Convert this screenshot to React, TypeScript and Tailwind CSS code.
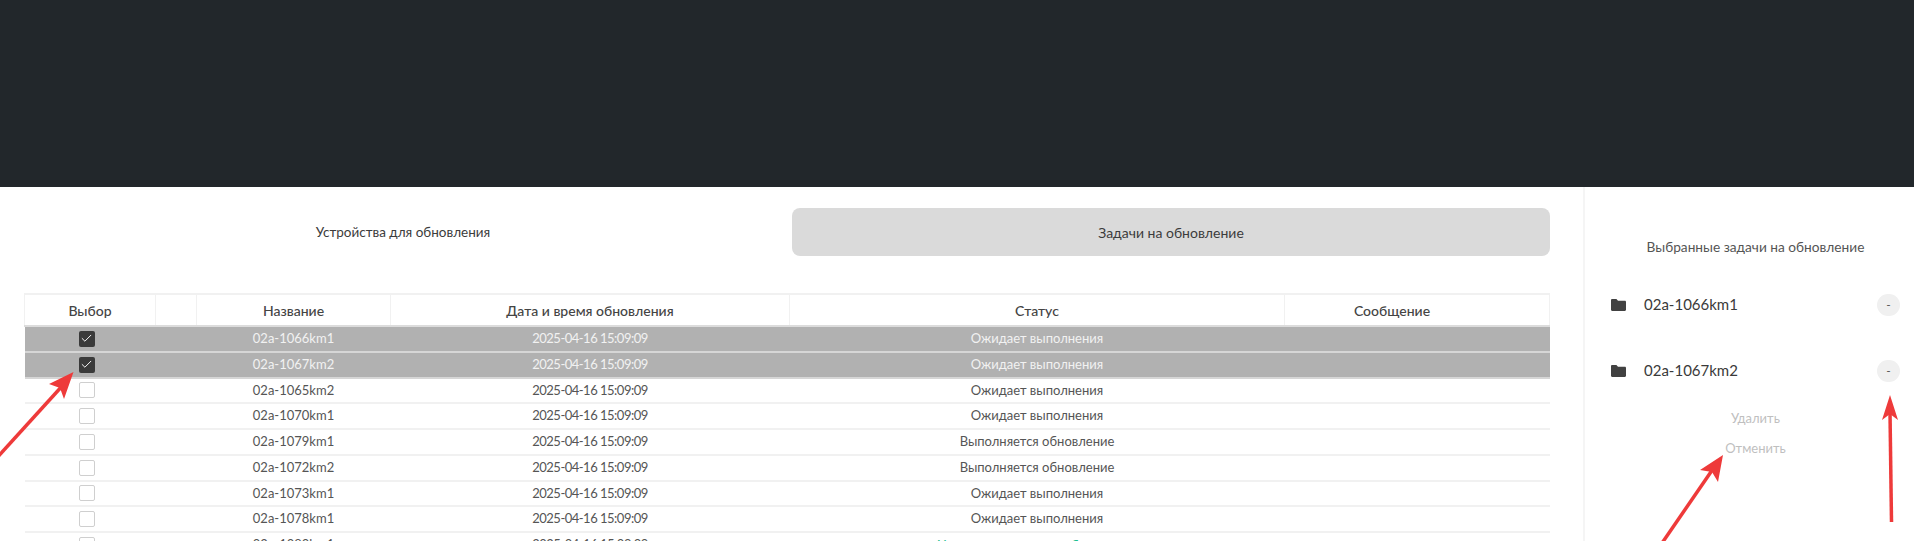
import { Check } from 'lucide-react';

const rows = [
  { name: '02a-1066km1', status: 'Ожидает выполнения', selected: true },
  { name: '02a-1067km2', status: 'Ожидает выполнения', selected: true },
  { name: '02a-1065km2', status: 'Ожидает выполнения', selected: false },
  { name: '02a-1070km1', status: 'Ожидает выполнения', selected: false },
  { name: '02a-1079km1', status: 'Выполняется обновление', selected: false },
  { name: '02a-1072km2', status: 'Выполняется обновление', selected: false },
  { name: '02a-1073km1', status: 'Ожидает выполнения', selected: false },
  { name: '02a-1078km1', status: 'Ожидает выполнения', selected: false },
  { name: '02a-1080km1', status: 'Успешно выполнено обновление', selected: false, done: true },
];

const chosen = ['02a-1066km1', '02a-1067km2'];

function FolderIcon() {
  return (
    <svg width="15" height="12" viewBox="0 0 15 12" className="shrink-0">
      <path d="M1.2 0h4.2l1.6 1.7h6.8c.7 0 1.2.5 1.2 1.2v7.900c0 .7-.5 1.200-1.200 1.200H1.200C.5 12 0 11.500 0 10.800V1.200C0 .5.500 0 1.200 0z" fill="#414141" />
    </svg>
  );
}

function Arrows() {
  return (
    <svg width="1914" height="541" viewBox="0 0 1914 541" className="absolute left-0 top-0 pointer-events-none">
      <g stroke="#ee3a3a" strokeWidth="3.500" fill="none">
        <path d="M-6 461L64 384" />
        <path d="M1660 546L1715 466" />
        <path d="M1891.500 522L1890 412" />
      </g>
      <g fill="#ee3a3a">
        <path d="M73.500 372L64 399L60 388L49 384z" />
        <path d="M1723 455L1718 482L1712 472L1700 470z" />
        <path d="M1890 395L1898 420L1890 414L1882 420z" />
      </g>
    </svg>
  );
}

export default function App() {
  return (
    <div className="relative h-[541px] w-[1914px] overflow-hidden bg-white font-['Lato','Noto_Sans',sans-serif] text-[#444]">
      <div className="h-[187px] bg-[#22272b]" />

      <div className="flex">
        <main className="w-[1583px] shrink-0 pl-[24px] pr-[33px]">
          <div className="mt-[21px] grid grid-cols-2 gap-[10px] text-[#3c3c3c]">
            <button className="flex h-[48px] items-center justify-center rounded-lg text-[13.500px]">Устройства для обновления</button>
            <button className="flex h-[48px] items-center justify-center rounded-lg bg-[#dadada] text-[14px]">Задачи на обновление</button>
          </div>

          <table className="mt-[37px] w-full table-fixed border-collapse text-[13px]">
            <colgroup>
              <col className="w-[131px]" />
              <col className="w-[41px]" />
              <col className="w-[194px]" />
              <col className="w-[399px]" />
              <col className="w-[495px]" />
              <col />
            </colgroup>
            <thead>
              <tr className="h-[32px] border-t-2 border-b-2 border-[#f1f1f1] border-b-[#dcdcdc] text-[14px] font-medium text-[#444]">
                <th className="border-x border-[#f1f1f1] font-medium">Выбор</th>
                <th className="border-x border-[#f1f1f1] font-medium"></th>
                <th className="border-x border-[#f1f1f1] font-medium">Название</th>
                <th className="border-x border-[#f1f1f1] font-medium">Дата и время обновления</th>
                <th className="border-x border-[#f1f1f1] font-medium">Статус</th>
                <th className="border-x border-[#f1f1f1] pr-[50px] font-medium">Сообщение</th>
              </tr>
            </thead>
            <tbody>
              {rows.map((row) => (
                <tr
                  key={row.name}
                  className={row.selected ? 'h-[25.750px] border-b-2 border-[#d6d6d6] bg-[#b1b1b1] text-[#f2f2f2]' : 'h-[25.750px] border-b-2 border-[#f1f1f1] text-[#555]'}
                >
                  <td className="p-0">
                    <div className="flex justify-center pr-[7px]">
                      {row.selected ? (
                        <span className="flex h-[16px] w-[16px] items-center justify-center rounded-[2px] bg-[#3a3a3a] text-white">
                          <Check size={13} strokeWidth={1.750} />
                        </span>
                      ) : (
                        <span className="h-[16px] w-[16px] rounded-[2px] border border-[#cfcfcf] bg-white" />
                      )}
                    </div>
                  </td>
                  <td className="p-0" />
                  <td className="p-0 text-center">{row.name}</td>
                  <td className="p-0 text-center tracking-[-0.5px]">2025-04-16 15:09:09</td>
                  <td className={row.done ? 'p-0 pt-[1px] text-center text-[#1fbf8f]' : 'p-0 text-center'}>{row.status}</td>
                  <td className="p-0" />
                </tr>
              ))}
            </tbody>
          </table>
        </main>

        <aside className="h-[354px] flex-1 border-l-2 border-[#f5f5f5] pl-[26px] pr-[14px]">
          <p className="mt-[50px] text-center text-[13.700px] text-[#555]">Выбранные задачи на обновление</p>
          <div className="mt-[36px] flex flex-col gap-[44px]">
            {chosen.map((name) => (
              <div key={name} className="flex h-[22px] items-center">
                <FolderIcon />
                <span className="ml-[18px] flex-1 text-[15px] text-[#3a3a3a]">{name}</span>
                <button className="flex h-[22px] w-[23px] items-center justify-center rounded-full bg-[#f0f0f0] text-[12px] text-[#555]">-</button>
              </div>
            ))}
          </div>
          <div className="mt-[27px] flex flex-col items-center gap-[11px] text-[13px] text-[#bfbfbf]">
            <button>Удалить</button>
            <button>Отменить</button>
          </div>
        </aside>
      </div>

      <Arrows />
    </div>
  );
}
